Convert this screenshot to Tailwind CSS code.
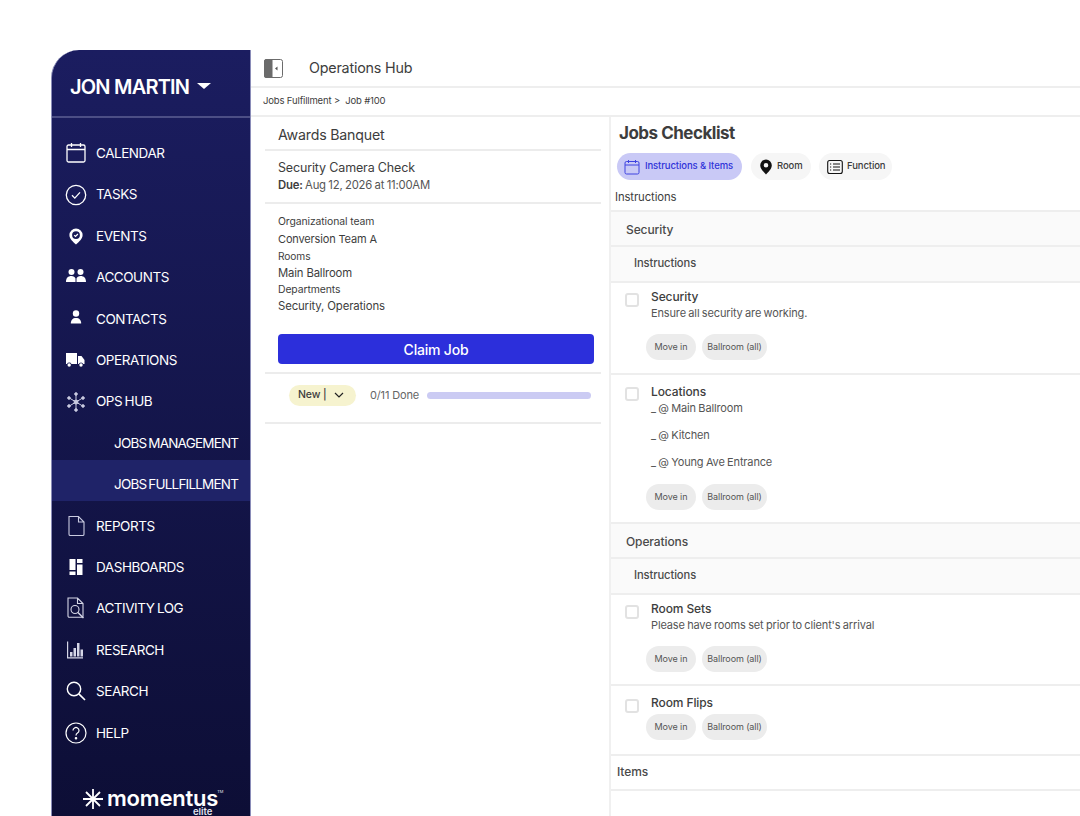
<!DOCTYPE html>
<html lang="en">
<head>
    <meta charset="UTF-8">
    <meta name="viewport" content="width=device-width, initial-scale=1.0">
    <title>Operations Hub</title>
    <script src="https://cdn.jsdelivr.net/npm/@tailwindcss/browser@4"></script>
</head>
<body class="bg-white font-['Inter',sans-serif] text-[#3d3d3d]">
<div class="w-[1080px] h-[816px] overflow-hidden pt-[50px] pl-[51px] flex">

    <!-- Sidebar -->
    <aside class="w-[200px] h-[766px] shrink-0 rounded-tl-[28px] bg-gradient-to-b from-[#1b1d60] to-[#0d0e36] text-white flex flex-col border-x border-[#8a8cb8]">
        <div class="h-[68px] shrink-0 border-b-2 border-[#4c4e85] flex items-center pl-[18px] pt-[8px] gap-2">
            <span class="text-[20px] font-semibold tracking-[-0.8px]">JON MARTIN</span>
            <span class="w-0 h-0 border-x-[7px] border-x-transparent border-t-[6px] border-t-white mb-[2px]"></span>
        </div>

        <nav class="pt-[14.5px] text-[13.5px] tracking-[-0.45px] [word-spacing:-1px]">
            <a class="flex items-center h-[41.4px] pl-[13px] gap-[9px]">
                <svg class="w-[22px] h-[22px]" viewBox="0 0 22 22" fill="none" stroke="currentColor" stroke-width="1.3"><rect x="2" y="3" width="18" height="17" rx="1.5"/><path d="M2 7.5h18M6.5 1v4M15.5 1v4"/></svg>
                <span>CALENDAR</span>
            </a>
            <a class="flex items-center h-[41.4px] pl-[13px] gap-[9px]">
                <svg class="w-[22px] h-[22px]" viewBox="0 0 22 22" fill="none" stroke="currentColor" stroke-width="1.3"><circle cx="11" cy="11" r="9.7"/><path d="M7 11.3l2.8 2.8L15 8.4"/></svg>
                <span>TASKS</span>
            </a>
            <a class="flex items-center h-[41.4px] pl-[13px] gap-[9px]">
                <svg class="w-[22px] h-[22px]" viewBox="0 0 22 22"><path fill="currentColor" fill-rule="evenodd" d="M11 3.5a6.6 6.6 0 0 0-6.6 6.6c0 3.8 3.7 6.900 6.600 9.400 2.900-2.500 6.600-5.600 6.600-9.400A6.600 6.600 0 0 0 11 3.500zm0 2.700a3.900 3.900 0 1 1 0 7.800 3.900 3.900 0 0 1 0-7.800z"/><path d="M9.200 10.200l1.300 1.300 2.400-2.500" fill="none" stroke="currentColor" stroke-width="1.200"/></svg>
                <span>EVENTS</span>
            </a>
            <a class="flex items-center h-[41.4px] pl-[13px] gap-[9px]">
                <svg class="w-[22px] h-[22px]" viewBox="0 0 22 22" fill="currentColor"><circle cx="6.500" cy="6" r="3"/><circle cx="15.500" cy="6" r="3"/><path d="M1 16c0-4 2-6 5.500-6 2 0 3.500 1 4 2.500V16zM11.500 16v-3.500c.5-1.500 2-2.500 4-2.500 3.500 0 5.500 2 5.500 6z"/></svg>
                <span>ACCOUNTS</span>
            </a>
            <a class="flex items-center h-[41.4px] pl-[13px] gap-[9px]">
                <svg class="w-[22px] h-[22px]" viewBox="0 0 22 22" fill="currentColor"><circle cx="11" cy="5.500" r="3.200"/><path d="M5.800 15.500c0-3.500 2-5.500 5.200-5.500s5.200 2 5.200 5.500z"/></svg>
                <span>CONTACTS</span>
            </a>
            <a class="flex items-center h-[41.4px] pl-[12px] gap-[10px]">
                <svg class="w-[22px] h-[22px]" viewBox="0 0 22 22" fill="currentColor"><path d="M2 4h11v11H7.500a2.500 2.500 0 0 0-4.500 0H2zM14 7h3.500l3 4v4h-1.200a2.500 2.500 0 0 0-4.600 0H14z"/><circle cx="5.200" cy="16" r="1.700"/><circle cx="17" cy="16" r="1.700"/></svg>
                <span>OPERATIONS</span>
            </a>
            <a class="flex items-center h-[41.4px] pl-[13px] gap-[9px]">
                <svg class="w-[22px] h-[22px]" viewBox="0 0 22 22" fill="none" stroke="#c9cae0" stroke-width="1"><path d="M11 2.500v17M3.500 6.500l15 9M18.500 6.500l-15 9"/><circle cx="11" cy="11" r="2" fill="#c9cae0"/><circle cx="11" cy="3" r="1.300" fill="#c9cae0"/><circle cx="11" cy="19" r="1.300" fill="#c9cae0"/><circle cx="4" cy="7" r="1.300" fill="#c9cae0"/><circle cx="18" cy="7" r="1.300" fill="#c9cae0"/><circle cx="4" cy="15" r="1.300" fill="#c9cae0"/><circle cx="18" cy="15" r="1.300" fill="#c9cae0"/></svg>
                <span>OPS HUB</span>
            </a>
            <a class="flex items-center h-[41.4px] pl-[62px] tracking-[-0.8px]">JOBS MANAGEMENT</a>
            <a class="flex items-center h-[41.4px] -mt-[3.9px] mb-[3.9px] pt-[7px] pl-[62px] tracking-[-0.8px] bg-[#1f2368]">JOBS FULLFILLMENT</a>
            <a class="flex items-center h-[41.4px] pl-[13px] gap-[9px]">
                <svg class="w-[22px] h-[22px]" viewBox="0 0 22 22" fill="none" stroke="#c9cae0" stroke-width="1.100"><path d="M4 1.500h9.500L19 7v12.200a1.300 1.300 0 0 1-1.300 1.300H5.300A1.300 1.300 0 0 1 4 19.200zM13.500 1.500V7H19"/></svg>
                <span>REPORTS</span>
            </a>
            <a class="flex items-center h-[41.4px] pl-[13px] gap-[9px]">
                <svg class="w-[22px] h-[22px]" viewBox="0 0 22 22" fill="currentColor"><path d="M4.500 3h6v11h-6zM4.500 15.500h6V19h-6zM12 3h5.500v4H12zM12 8.500h5.500V19H12z"/></svg>
                <span>DASHBOARDS</span>
            </a>
            <a class="flex items-center h-[41.4px] pl-[13px] gap-[9px]">
                <svg class="w-[22px] h-[22px]" viewBox="0 0 22 22" fill="none" stroke="#d5d6e6" stroke-width="1.100"><path d="M3 1h9.500L18 6.500V19a1.200 1.200 0 0 1-1.200 1.200H4.200A1.200 1.200 0 0 1 3 19zM12.500 1v5.500H18"/><circle cx="10" cy="12.500" r="4"/><path d="M13 15.500l5.500 5.500" stroke-width="1.500"/></svg>
                <span>ACTIVITY LOG</span>
            </a>
            <a class="flex items-center h-[41.4px] pl-[13px] gap-[9px]">
                <svg class="w-[22px] h-[22px]" viewBox="0 0 22 22" fill="#d5d6e6"><path d="M2 2.500h1.200v15.800H18v1.200H2zM5 13h2.500v4.500H5zM8.500 9H11v8.500H8.500zM12 4h2.500v13.500H12zM15.500 10.500H18v7h-2.500z"/></svg>
                <span>RESEARCH</span>
            </a>
            <a class="flex items-center h-[41.4px] pl-[13px] gap-[9px]">
                <svg class="w-[22px] h-[22px]" viewBox="0 0 22 22" fill="none" stroke="currentColor" stroke-width="1.400"><circle cx="9" cy="9" r="6.700"/><path d="M13.800 13.800l6.200 6.200" stroke-width="1.700"/></svg>
                <span>SEARCH</span>
            </a>
            <a class="flex items-center h-[41.4px] pl-[13px] gap-[9px]">
                <svg class="w-[22px] h-[22px]" viewBox="0 0 22 22" fill="none" stroke="currentColor" stroke-width="1.200"><circle cx="11" cy="11" r="10"/><path d="M8 8.500a3 3 0 1 1 4.500 2.600c-1 .6-1.500 1.200-1.500 2.400"/><circle cx="11" cy="16.200" r=".7" fill="currentColor"/></svg>
                <span>HELP</span>
            </a>
        </nav>

        <div class="mt-[35px] ml-[30px] flex items-center gap-[3px] relative">
            <svg class="w-[22px] h-[22px]" viewBox="0 0 22 22" fill="none" stroke="white" stroke-width="1.800"><path d="M11 1v20M1 11h20M4 4l14 14M18 4L4 18"/></svg>
            <span class="text-[22px] font-semibold leading-[12px] tracking-[-0.2px] -mt-[3px]">momentus</span>
            <span class="self-start text-[4px] leading-none mt-[2px] -ml-[4px] text-[#e4e4ee]">TM</span>
            <span class="absolute left-[111px] top-[19px] text-[9.500px] font-semibold leading-none text-[#e4e4ee]">elite</span>
        </div>
    </aside>

    <!-- Main -->
    <main class="w-[829px] shrink-0 flex flex-col">
        <div class="h-[38px] shrink-0 border-b-2 border-[#eeeeee] flex items-center pl-[13px]">
            <svg class="w-[19px] h-[19px]" viewBox="0 0 19 19"><rect x=".5" y=".5" width="18" height="18" rx="2" fill="#fff" stroke="#6b6b6b"/><path d="M2.500 0h6v19h-6A2.500 2.500 0 0 1 0 16.500v-14A2.500 2.500 0 0 1 2.500 0z" fill="#6b6b6b"/><path d="M13.500 7.500v4l-2.500-2z" fill="#555"/></svg>
            <span class="ml-[26px] text-[14.300px] tracking-[-0.2px] -mt-[1px]">Operations Hub</span>
        </div>
        <div class="h-[29px] shrink-0 border-b-2 border-[#eeeeee] flex items-center pl-[12px] text-[9.500px] tracking-[-0.15px]">
            Jobs Fulfillment&nbsp;&gt;&nbsp; Job #100
        </div>

        <div class="flex flex-1 min-h-0">
            <!-- Left column -->
            <section class="w-[360px] shrink-0 border-r-2 border-[#f0f0f0] pl-[14px] pr-[8px]">
                <div class="h-[34px] border-b-2 border-[#ececec] flex items-center pl-[13px] pt-[3px] text-[14.200px] tracking-[-0.2px]">Awards Banquet</div>
                <div class="h-[53px] border-b-2 border-[#ececec] pl-[13px] pt-[8px]">
                    <p class="text-[12.500px] leading-[17px] tracking-[-0.15px]">Security Camera Check</p>
                    <p class="text-[11.300px] leading-[18px] tracking-[-0.2px] [word-spacing:-0.5px] text-[#555]"><b class="font-semibold text-[#3d3d3d]">Due:</b> Aug 12, 2026 at 11:00AM</p>
                </div>
                <div class="h-[170px] border-b-2 border-[#ececec] pl-[13px] pt-[9px] pr-[7px]">
                    <p class="text-[10.400px] leading-[17px] tracking-[-0.1px]">Organizational team</p>
                    <p class="text-[11px] leading-[18px] tracking-[-0.15px]">Conversion Team A</p>
                    <p class="text-[10.200px] leading-[17px] tracking-[-0.1px]">Rooms</p>
                    <p class="text-[11.300px] leading-[17px] tracking-[-0.15px]">Main Ballroom</p>
                    <p class="text-[10.400px] leading-[15px] tracking-[-0.1px]">Departments</p>
                    <p class="text-[11.400px] leading-[18px] tracking-[-0.15px]">Security, Operations</p>
                    <button class="mt-[19px] w-full h-[30px] rounded-[4px] bg-[#2c2fdb] text-white text-[14px] font-medium tracking-[-0.2px]">Claim Job</button>
                </div>
                <div class="h-[50px] border-b-2 border-[#ececec] flex items-center pl-[24px] pb-[6px] pr-[10px]">
                    <span class="w-[67px] h-[21px] rounded-full bg-[#f6f3cf] flex items-center pl-[9px] text-[10.500px] font-medium tracking-[-0.1px]">New |
                        <svg class="w-[10px] h-[10px] ml-[7px]" viewBox="0 0 10 10" fill="none" stroke="#222" stroke-width="1.200"><path d="M1 3l4 4 4-4"/></svg>
                    </span>
                    <span class="ml-[14px] text-[11px] text-[#666] tracking-[-0.15px]">0/11 Done</span>
                    <span class="ml-[8px] flex-1 h-[7px] rounded-full bg-[#cbcbf3]"></span>
                </div>
            </section>

            <!-- Right column -->
            <section class="flex-1 min-w-0">
                <div class="h-[95px] border-b-2 border-[#eeeeee] relative">
                    <h2 class="pl-[8px] pt-[5px] text-[17px] leading-[22px] font-bold tracking-[-0.5px]">Jobs Checklist</h2>
                    <div class="flex mt-[9px] pl-[6px] text-[9.500px] font-medium tracking-[-0.1px]">
                        <span class="w-[125px] h-[27px] rounded-full bg-[#c9c9f6] text-[#3034d9] flex items-center pl-[7px] gap-[5px]">
                            <svg class="w-[16px] h-[16px]" viewBox="0 0 16 16" fill="none" stroke="#3e42e0" stroke-width="1"><rect x="1" y="2.500" width="14" height="12.500" rx="1.500"/><path d="M1 6h14M4.500 1v3M11.500 1v3"/></svg>
                            Instructions &amp; Items
                        </span>
                        <span class="ml-[9px] w-[60px] h-[27px] rounded-full bg-[#f6f6f6] flex items-center pl-[8px] gap-[4px]">
                            <svg class="w-[14px] h-[16px]" viewBox="0 0 14 16"><path fill-rule="evenodd" d="M7 .5A5.800 5.800 0 0 0 1.200 6.300C1.200 10 4.700 13 7 15.500c2.300-2.500 5.800-5.500 5.800-9.200A5.800 5.800 0 0 0 7 .5zm0 3.500a2.300 2.300 0 1 1 0 4.600A2.300 2.300 0 0 1 7 4z" fill="#111"/></svg>
                            Room
                        </span>
                        <span class="ml-[8px] w-[73px] h-[27px] rounded-full bg-[#f6f6f6] flex items-center pl-[8px] gap-[4px]">
                            <svg class="w-[16px] h-[16px]" viewBox="0 0 16 16" fill="none" stroke="#111" stroke-width="1.100"><rect x=".7" y="1.500" width="14.600" height="13" rx="2"/><path d="M6 5h7M6 8h7M6 11h7M3 5h1.200M3 8h1.200M3 11h1.200"/></svg>
                            Function
                        </span>
                    </div>
                    <p class="pl-[4px] mt-[9px] text-[11.300px] leading-[16px] tracking-[-0.1px]">Instructions</p>
                </div>

                <div class="h-[35px] border-b-2 border-[#eeeeee] bg-[#fafafa] flex items-center pl-[15px] pt-[2px] text-[12px] font-medium tracking-[-0.1px] text-[#4a4a4a]">Security</div>
                <div class="h-[36px] border-b-2 border-[#eeeeee] bg-[#fafafa] flex items-center pl-[23px] pb-[2px] text-[11.200px] font-medium tracking-[-0.1px] text-[#4a4a4a]">Instructions</div>

                <div class="h-[92px] border-b-2 border-[#eeeeee] flex pl-[14px] pt-[6px]">
                    <span class="mt-[4px] w-[14px] h-[14px] rounded-[3px] border-2 border-[#e2e2e2] bg-white shrink-0"></span>
                    <div class="ml-[12px]">
                        <p class="text-[12px] leading-[16px] font-medium tracking-[-0.1px]">Security</p>
                        <p class="text-[11px] leading-[16px] tracking-[-0.15px] [word-spacing:-0.5px] text-[#555]">Ensure all security are working.</p>
                        <div class="flex gap-[6px] mt-[13px] -ml-[5px] text-[9px] tracking-[-0.1px] text-[#555]">
                            <span class="w-[50px] h-[26px] rounded-full bg-[#ececec] flex items-center justify-center">Move in</span>
                            <span class="w-[65px] h-[26px] rounded-full bg-[#ececec] flex items-center justify-center">Ballroom (all)</span>
                        </div>
                    </div>
                </div>

                <div class="h-[149px] border-b-2 border-[#eeeeee] flex pl-[14px] pt-[9px]">
                    <span class="mt-[3px] w-[14px] h-[14px] rounded-[3px] border-2 border-[#e2e2e2] bg-white shrink-0"></span>
                    <div class="ml-[12px]">
                        <p class="text-[12px] leading-[16px] font-medium tracking-[-0.1px]">Locations</p>
                        <p class="text-[11px] leading-[16px] tracking-[-0.15px] [word-spacing:-0.5px] text-[#555]">_ @ Main Ballroom</p>
                        <p class="text-[11px] leading-[16px] tracking-[-0.15px] [word-spacing:-0.5px] text-[#555] mt-[11px]">_ @ Kitchen</p>
                        <p class="text-[11px] leading-[16px] tracking-[-0.15px] [word-spacing:-0.5px] text-[#555] mt-[11px]">_ @ Young Ave Entrance</p>
                        <div class="flex gap-[6px] mt-[14px] -ml-[5px] text-[9px] tracking-[-0.1px] text-[#555]">
                            <span class="w-[50px] h-[26px] rounded-full bg-[#ececec] flex items-center justify-center">Move in</span>
                            <span class="w-[65px] h-[26px] rounded-full bg-[#ececec] flex items-center justify-center">Ballroom (all)</span>
                        </div>
                    </div>
                </div>

                <div class="h-[35px] border-b-2 border-[#eeeeee] bg-[#fafafa] flex items-center pl-[15px] pt-[3px] text-[12px] font-medium tracking-[-0.1px] text-[#4a4a4a]">Operations</div>
                <div class="h-[36px] border-b-2 border-[#eeeeee] bg-[#fafafa] flex items-center pl-[23px] pb-[2px] text-[11.200px] font-medium tracking-[-0.1px] text-[#4a4a4a]">Instructions</div>

                <div class="h-[91px] border-b-2 border-[#eeeeee] flex pl-[14px] pt-[6px]">
                    <span class="mt-[4px] w-[14px] h-[14px] rounded-[3px] border-2 border-[#e2e2e2] bg-white shrink-0"></span>
                    <div class="ml-[12px]">
                        <p class="text-[12px] leading-[16px] font-medium tracking-[-0.1px]">Room Sets</p>
                        <p class="text-[11px] leading-[16px] tracking-[-0.15px] [word-spacing:-0.5px] text-[#555]">Please have rooms set prior to client's arrival</p>
                        <div class="flex gap-[6px] mt-[13px] -ml-[5px] text-[9px] tracking-[-0.1px] text-[#555]">
                            <span class="w-[50px] h-[26px] rounded-full bg-[#ececec] flex items-center justify-center">Move in</span>
                            <span class="w-[65px] h-[26px] rounded-full bg-[#ececec] flex items-center justify-center">Ballroom (all)</span>
                        </div>
                    </div>
                </div>

                <div class="h-[70px] border-b-2 border-[#eeeeee] flex pl-[14px] pt-[9px]">
                    <span class="mt-[4px] w-[14px] h-[14px] rounded-[3px] border-2 border-[#e2e2e2] bg-white shrink-0"></span>
                    <div class="ml-[12px]">
                        <p class="text-[12px] leading-[16px] font-medium tracking-[-0.1px]">Room Flips</p>
                        <div class="flex gap-[6px] mt-[3px] -ml-[5px] text-[9px] tracking-[-0.1px] text-[#555]">
                            <span class="w-[50px] h-[26px] rounded-full bg-[#ececec] flex items-center justify-center">Move in</span>
                            <span class="w-[65px] h-[26px] rounded-full bg-[#ececec] flex items-center justify-center">Ballroom (all)</span>
                        </div>
                    </div>
                </div>

                <div class="h-[35px] border-b-2 border-[#eeeeee] flex items-center pl-[6px] pb-[2px] text-[12px] font-medium tracking-[-0.1px] text-[#4a4a4a]">Items</div>
            </section>
        </div>
    </main>
</div>
</body>
</html>
